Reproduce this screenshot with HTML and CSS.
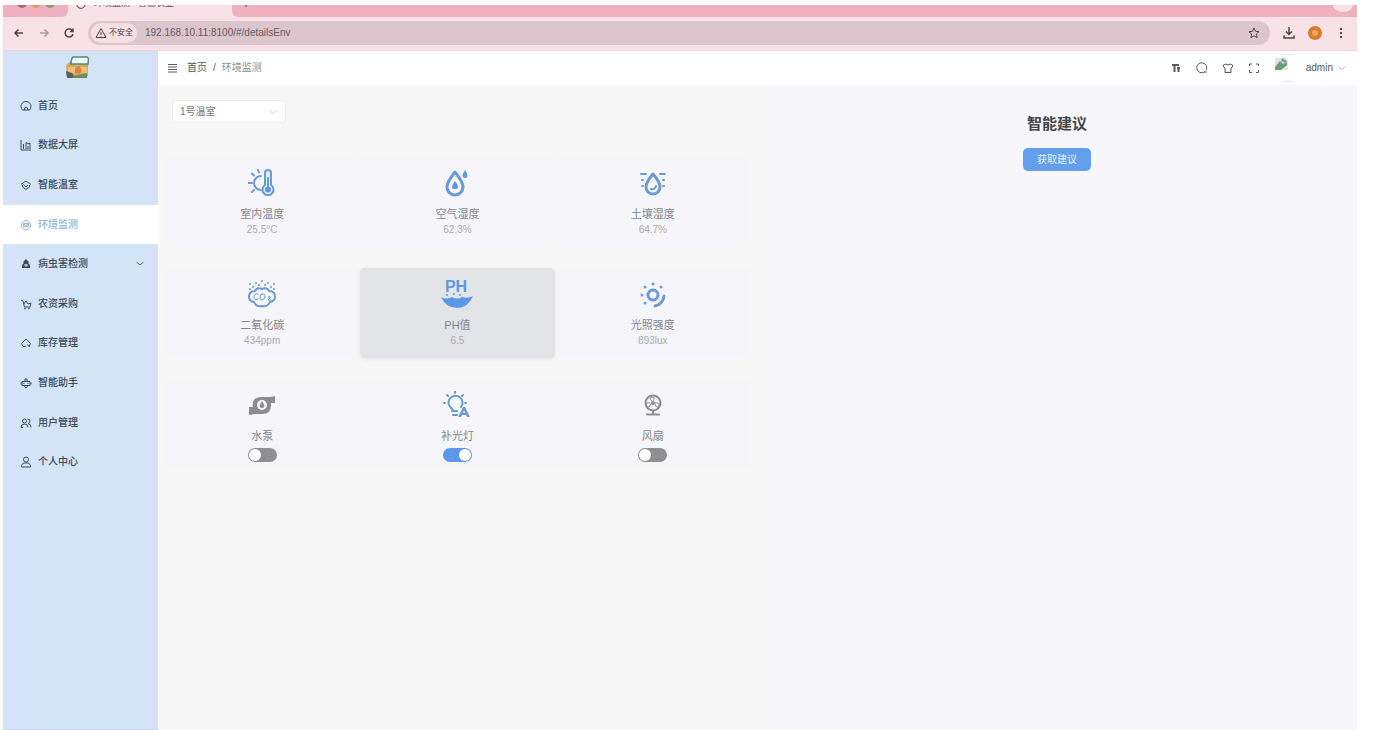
FILE: index.html
```html
<!DOCTYPE html>
<html lang="zh-CN">
<head>
<meta charset="utf-8">
<title>环境监测 - 智慧农业</title>
<link rel="stylesheet" href="styles.css">
</head>
<body>
<div class="window">
  <div class="tabstrip">
    <div class="strip-left"><span class="light light-red"></span><span class="light light-yellow"></span><span class="light light-green"></span></div>
    <div class="tab"><span class="tab-ring"></span><span class="tab-title">环境监测 - 智慧农业</span></div>
    <div class="strip-right"><svg class="tab-new" viewBox="0 0 12 12"><path d="M6 2v8M2 6h8"/></svg><span class="strip-menu"></span></div>
  </div>
  <div class="toolbar">
    <button class="tool" aria-label="后退"><svg viewBox="0 0 12 12"><path class="medium" d="M10 6H2M5.500 2.500 2 6l3.500 3.500"/></svg></button>
    <button class="tool faded" aria-label="前进"><svg viewBox="0 0 12 12"><path class="medium" d="M2 6h8M6.500 2.500 10 6 6.500 9.500"/></svg></button>
    <button class="tool" aria-label="刷新"><svg viewBox="0 0 12 12"><path class="medium" d="M9.700 4.200A4 4 0 1 0 10 7M10 1.500v3H7"/></svg></button>
    <div class="address">
      <span class="insecure"><svg viewBox="0 0 12 12"><path d="M6 1.500 11 10.500H1zM6 5v3M6 8.800v.7"/></svg>不安全</span>
      <input class="url" type="text" aria-label="地址" value="192.168.10.11:8100/#/detailsEnv">
      <svg class="star" viewBox="0 0 12 12"><path d="m6 1 1.500 3.300 3.500.4-2.600 2.400.7 3.500L6 8.900l-3.100 1.700.7-3.500L1 4.700l3.500-.4z"/></svg>
    </div>
    <button class="tool" aria-label="下载"><svg viewBox="0 0 12 12"><path class="medium" d="M6 0v7M3 4.500l3 3 3-3M1 8.500v2.500h10V8.500"/></svg></button>
    <span class="profile"></span>
    <button class="tool" aria-label="更多"><svg viewBox="0 0 12 12"><path class="solid" d="M5 1h2v2H5zM5 5h2v2H5zM5 9h2v2H5z"/></svg></button>
  </div>
  <div class="app">
    <aside class="sidebar">
      <svg class="logo" viewBox="0 0 24 24"><path fill="#d7a75c" d="M1 9 6 5h17v15q-10 3-21 1z"/><path fill="#f4f8f5" stroke="#4c8b82" stroke-width="1.500" d="M8 1h14q2 0 1 7H6q0-5 2-7z"/><path fill="#e9c36f" d="M3 11h19v6H3z"/><path fill="#db804a" d="m10 12 4-2 3 4-2 4-5-1z"/><path fill="#59615e" d="m1 15 6 2 3 5H2z"/><path fill="#678e61" d="m9 20 13-3v5H8z"/></svg>
      <nav class="menu">
        <a class="item" href="#home"><svg viewBox="0 0 12 12"><path d="M2.500 10A5 5 0 1 1 9.500 10zM4.500 10V8q1.500-2 3 0v2"/></svg>首页</a>
        <a class="item" href="#screen"><svg viewBox="0 0 12 12"><path d="M1 1v10h10M3.500 10V5M6 10V3.500L8 5l2-1v6M8 10V7"/></svg>数据大屏</a>
        <a class="item" href="#house"><svg viewBox="0 0 12 12"><path d="M1 5.500 6 2l5 3.500M2.500 6v2L6 10.500 9.500 8V6M3.500 5.500 6 8l2-2"/></svg>智能温室</a>
        <a class="item active" href="#env"><svg viewBox="0 0 12 12"><circle cx="6" cy="6" r="4.500"/><path d="M3.500 4.500h5v3h-5zM4 5l2 2 3-3"/></svg>环境监测</a>
        <a class="item" href="#pest"><svg viewBox="0 0 12 12"><path class="solid" d="M6 1 9 4 8 5q2 1 2 3v2H2V8q0-2 2-3L3 4z"/><path class="light-line" d="M4 7h4M6 6v3"/></svg>病虫害检测<svg class="caret" viewBox="0 0 12 12"><path d="m2 4 4 3 4-3"/></svg></a>
        <a class="item" href="#buy"><svg viewBox="0 0 12 12"><path d="m1 2 2 1 1.500 6H10l1-4-3 1-2-3-2 3"/><circle cx="5" cy="10.500" r=".5"/><circle cx="9" cy="10.500" r=".5"/></svg>农资采购</a>
        <a class="item" href="#stock"><svg viewBox="0 0 12 12"><path d="M3 9.500 1.500 6.500 6 2l4.500 4.500L9 9.500M3 9.500h3M7 7.500l3 2.500"/></svg>库存管理</a>
        <a class="item" href="#assistant"><svg viewBox="0 0 12 12"><path d="M6 1v2M2 4.500h8v4H2zM1 5.500v2M11 5.500v2M4 6v1M8 6v1M4 8.500 6 11l2-2.500M4 3h4"/></svg>智能助手</a>
        <a class="item" href="#users"><svg viewBox="0 0 12 12"><circle cx="4.500" cy="4" r="2"/><path d="M1 10.500Q1 7 4.500 7T8 10.500M7.500 2Q10 2 10 4T8 6.500q3 .5 3 4M1 10.500h2"/></svg>用户管理</a>
        <a class="item" href="#me"><svg viewBox="0 0 12 12"><circle cx="6" cy="3.500" r="2.500"/><path d="M1.500 11V9.500Q2 7.500 4 7h4q2 .5 2.500 2.500V11z"/></svg>个人中心</a>
      </nav>
    </aside>
    <div class="content">
      <header class="header">
        <button class="tool" aria-label="收起菜单"><svg viewBox="0 0 12 12"><path d="M2 2.500h9M2 5h9M2 7.500h9M2 10h9"/></svg></button>
        <div class="crumbs"><a href="#home">首页</a><span>/</span><span class="current">环境监测</span></div>
        <div class="actions">
          <button class="tool" aria-label="字号"><svg viewBox="0 0 12 12"><path class="thick" d="M2 3h7M4.500 3v7M7 6h3M8.500 6v4"/></svg></button>
          <button class="tool" aria-label="搜索"><svg viewBox="0 0 12 12"><path d="M8.500 10A5 5 0 1 1 10 8.500M8 10h3"/></svg></button>
          <button class="tool" aria-label="主题"><svg viewBox="0 0 12 12"><path d="m1.500 3 2.500-1q2 2 4 0l2.500 1v2L9 6v4.500H3V6L1.500 5z"/></svg></button>
          <button class="tool" aria-label="全屏"><svg viewBox="0 0 12 12"><path d="M1.500 4V2H4M8 2h2.500v2M10.500 8v2.500H8M4 10.500H1.500V8"/></svg></button>
          <svg class="avatar" viewBox="0 0 20 28"><path fill="#dfe5e6" d="M1 4h10l3 3v9H1z"/><path fill="#6b9c78" d="m1 13 5-6 3 3 4-2v3L7 16H1z"/><path fill="#8298ae" d="m8 4 5 3-2 2-4-2z"/><path stroke="#e5e5e5" d="M8 .5h12M8 27.500h12"/></svg>
          <button class="user">admin<svg viewBox="0 0 12 12"><path d="m2 4 4 4 4-4"/></svg></button>
        </div>
      </header>
      <main class="main">
        <section class="monitor">
          <label class="picker"><select aria-label="温室"><option>1号温室</option></select><svg viewBox="0 0 12 12"><path d="m2 4 4 4 4-4"/></svg></label>
          <div class="cards">
            <article class="card">
              <svg class="glyph" viewBox="0 0 28 28"><path d="M13 7a7 7 0 0 0 0 14M10 1l1 2.500M4 4.500l2 2M0 14h4M4 23l2-2"/><path fill="#e1f1fc" d="M17 16V4a3 3 0 0 1 6 0v12a5.500 5.500 0 1 1-6 0z"/><circle class="blue" cx="20" cy="20.500" r="3"/><path d="M20 9v10"/></svg>
              <h3>室内温度</h3><p>25.5°C</p>
            </article>
            <article class="card">
              <svg class="glyph" viewBox="0 0 28 28"><path class="bold" d="M12 3Q4 13 4 18a8 8 0 0 0 16 0q0-5-8-15z"/><path class="blue" d="M12 12q-6 8 0 8t0-8zM22 1q-5 8 0 8t0-8z"/></svg>
              <h3>空气湿度</h3><p>62.3%</p>
            </article>
            <article class="card">
              <svg class="glyph" viewBox="0 0 28 28"><path class="bold" d="M14 5Q7 13 7 18a7 7 0 0 0 14 0q0-5-7-13z"/><path d="M2 5h5M21 5h5M3 11h1M24 11h1M3 17h1M24 17h1M12 20q4 1 5-3"/></svg>
              <h3>土壤湿度</h3><p>64.7%</p>
            </article>
            <article class="card">
              <svg class="glyph" viewBox="0 0 28 28"><path d="M7 11q2-4 7-2 5-2 7 2 6 0 6 6 0 4-5 5-2 5-8 4-6 1-8-4-5-1-5-5 0-6 6-6z"/><path class="dots" d="M2 4h0M8 3h0M14 1h0M20 3h0M26 4h0M5 7h0M11 5h0M17 5h0M23 7h0M2 9h0M26 9h0"/><path class="thin" d="M10 14q-4-1-4 3t4 2M14 14q-2 0-2 3t2 3 3-3-3-3M20 17q3-1 2 1l-2 2h3"/></svg>
              <h3>二氧化碳</h3><p>434ppm</p>
            </article>
            <article class="card hovered">
              <svg class="glyph ph" viewBox="0 0 32 32"><text x="15" y="14" text-anchor="middle">PH</text><path class="blue" d="M0 19q5 3 11 0 5 3 10 0 6 2 11-1-5 12-16 12T0 19z"/><path class="dots" d="M6 17h0M13 16h0M19 17h0"/></svg>
              <h3>PH值</h3><p>6.5</p>
            </article>
            <article class="card">
              <svg class="glyph" viewBox="0 0 28 28"><circle class="bold" cx="14" cy="15" r="5"/><path class="bold" d="M25 16a11 11 0 0 1-9 10"/><path class="dots big" d="M14 4h0M6 7h0M22 7h0M3 15h0M6 23h0"/></svg>
              <h3>光照强度</h3><p>893lux</p>
            </article>
            <article class="card">
              <svg class="glyph off" viewBox="0 0 28 28"><path class="grey" d="M1 16h4Q3 6 14 6h8l5-1v7h-4q1 11-9 11H7l-6 1z"/><circle class="hole" cx="14" cy="14" r="5"/><path class="grey" d="M14 10q-5 7 0 7t0-7z"/></svg>
              <h3>水泵</h3><input class="switch" type="checkbox" aria-label="水泵">
            </article>
            <article class="card">
              <svg class="glyph" viewBox="0 0 28 28"><path d="M10 20q0-2-2-3a7 7 0 1 1 10-1M9 20h5M10 24h4M12 0v2M4 4l1 1M20 4l-1 1M1 12h1M22 12h1"/><path class="blue muted" d="m20 16-5 10h3l1-2h4l1 2h3l-5-10zm1 3 1 3h-2z"/></svg>
              <h3>补光灯</h3><input class="switch" type="checkbox" checked aria-label="补光灯">
            </article>
            <article class="card">
              <svg class="glyph off" viewBox="0 0 28 28"><circle cx="14" cy="12" r="7.500"/><circle cx="14" cy="12" r="1"/><path class="thin" d="M13 10q-4-3 0-4 4 0 1 4M16 12q5-1 4 3-3 3-4-2M12 13q-2 5-5 2-1-4 4-3"/><path d="M14 20v3M8 23.500h12"/></svg>
              <h3>风扇</h3><input class="switch" type="checkbox" aria-label="风扇">
            </article>
          </div>
        </section>
        <section class="advice">
          <h2>智能建议</h2>
          <button class="primary">获取建议</button>
        </section>
      </main>
    </div>
  </div>
</div>
</body>
</html>
```
FILE: styles.css
```css
* { box-sizing: border-box; }
body {
  margin: 0;
  padding: 5px 17px 0 3px;
  background: #fff;
  color: #555a61;
  font: 10px/16px "Liberation Sans", "Noto Sans CJK SC", sans-serif;
}
h2, h3, p { margin: 0; }
a { color: inherit; text-decoration: none; }
button, input, select { font: inherit; color: inherit; }
button { border: 0; padding: 0; background: none; }
svg { display: block; flex: none; width: 12px; height: 12px; fill: none; stroke: currentColor; }
.solid { fill: currentColor; stroke: none; }
.medium { stroke-width: 1.5; }
.thick { stroke-width: 2; }
.light-line { stroke: #d6e3f7; }
.window { display: flex; flex-direction: column; min-height: calc(100vh - 5px); }

.tabstrip { display: flex; height: 12px; overflow: hidden; background: #f9e1e8; }
.strip-left, .strip-right { display: flex; background: #efb1c0; }
.strip-left { gap: 4px; width: 65px; padding-left: 14px; border-radius: 0 0 6px 0; }
.strip-right { flex: 1; justify-content: space-between; padding: 0 4px 0 8px; border-radius: 0 0 0 6px; }
.light { width: 10px; height: 10px; margin-top: -7px; border-radius: 50%; }
.light-red { background: #b95d64; }
.light-yellow { background: #d99b6d; }
.light-green { background: #85a06c; }
.tab { display: flex; width: 164px; height: 12px; padding: 0 8px; gap: 8px; color: #665a60; font-size: 9px; line-height: 12px; }
.tab > *, .strip-right > * { margin-top: -8px; }
.tab-ring { width: 10px; height: 12px; border: 1px solid #665a60; border-radius: 50%; }
.tab-title { flex: 1; white-space: nowrap; }
.strip-menu { width: 20px; height: 15px; border-radius: 50%; background: #f9e1e8; }

.toolbar { display: flex; align-items: center; height: 34px; padding: 0 10px 2px; gap: 13px; background: #f9e1e8; border-bottom: 1px solid #ebd4dd; color: #514448; }
.faded { opacity: .45; }
.address { flex: 1; display: flex; align-items: center; height: 24px; padding: 0 10px 0 3px; gap: 8px; border-radius: 12px; background: #dcc5cc; }
.insecure { display: flex; align-items: center; gap: 2px; height: 20px; padding: 0 4px; border-radius: 10px; background: #f4dfe5; font-size: 8px; }
.url { flex: 1; min-width: 0; border: 0; padding: 0; background: none; color: #675860; }
.profile { width: 14px; height: 14px; border: 4px solid #d77e2e; border-radius: 50%; background: #f0aa60; }

.app { flex: 1; display: flex; }
.sidebar { width: 155px; flex: none; background: linear-gradient(90deg, #d7e3fb, #d3e4f6 30%, #d3e4f6 92%, #d7e0f7); border-bottom: 1px solid #c9d4ec; }
.logo { width: 24px; height: 24px; margin: 5px auto 6px 62px; stroke: none; }
.menu { display: flex; flex-direction: column; height: 396px; }
.item { flex: 1; display: flex; align-items: center; gap: 6px; padding: 0 13px 0 17px; color: #3d4858; font-weight: 500; }
.active { background: #fff; color: #8fb6d8; }
.caret { width: 10px; height: 10px; margin-left: auto; }

.content { flex: 1; min-width: 0; display: flex; flex-direction: column; }
.header { display: flex; align-items: center; height: 34px; padding: 0 10px 0 8px; background: #fff; }
.crumbs { display: flex; gap: 6px; margin-left: 9px; }
.current { color: #8b8e94; }
.actions { display: flex; align-items: center; gap: 14px; margin-left: auto; }
.avatar { width: 20px; height: 28px; margin-right: -2px; stroke: none; }
.user { display: flex; align-items: center; gap: 4px; }
.user svg { width: 10px; height: 10px; color: #a1a1a6; }

.main { flex: 1; display: grid; grid-template-columns: 605fr 592fr; padding-left: 2px; background: #fafafd; }
.monitor { padding: 15px 15px 24px 5px; background: #f7f7f8; }
.picker { display: flex; align-items: center; width: 114px; margin-left: 7px; padding-right: 7px; border: 1px solid #ececef; border-radius: 3px; background: #fff; }
.picker select { flex: 1; height: 21px; padding: 0 7px; border: 0; appearance: none; background: none; color: #777; }
.picker svg { width: 10px; height: 10px; color: #c5c7cc; }
.cards { display: grid; grid-template-columns: repeat(3, 1fr); gap: 21px 1px; margin-top: 34px; }
.card { display: flex; flex-direction: column; align-items: center; height: 90px; padding-top: 12px; border-radius: 5px; background: #f6f6fa; }
.hovered { background: #e3e4e7; box-shadow: 0 1px 4px #e4e4e7; }
.card h3 { margin-top: 9px; color: #85868a; font-size: 11px; line-height: 16px; font-weight: 400; }
.card p { color: #aaaab0; }
.glyph { width: 28px; height: 28px; color: #6a9bd5; stroke-width: 2; stroke-linecap: round; stroke-linejoin: round; }
.off { color: #8d8d90; }
.bold { stroke-width: 3; }
.thin { stroke-width: 1; }
.dots { stroke-width: 2; }
.big { stroke-width: 3; }
.blue { fill: #5c98e8; stroke: none; }
.muted { fill: #6a9bd5; }
.grey { fill: #8d8d90; stroke: none; }
.hole { fill: #f6f6fa; stroke: none; }
.ph { width: 32px; height: 32px; margin: -2px 0; }
.ph text { fill: #5c98e8; stroke: none; font-size: 16px; font-weight: 700; }
.switch { display: flex; align-items: center; width: 29px; height: 14px; margin: 4px 0 0; padding: 1px; border-radius: 7px; appearance: none; background: #8f8f92; }
.switch::before { content: ""; width: 12px; height: 12px; border-radius: 50%; background: #fff; }
.switch:checked { justify-content: flex-end; background: #5c97e8; }

.advice { display: flex; flex-direction: column; align-items: center; padding: 29px 8px 0 0; background: #f6f6fb; }
.advice h2 { color: #45464a; font-size: 15px; line-height: 20px; font-weight: 700; }
.primary { width: 68px; height: 23px; margin-top: 14px; border-radius: 5px; background: #629fec; color: #e4f0ff; }
```
